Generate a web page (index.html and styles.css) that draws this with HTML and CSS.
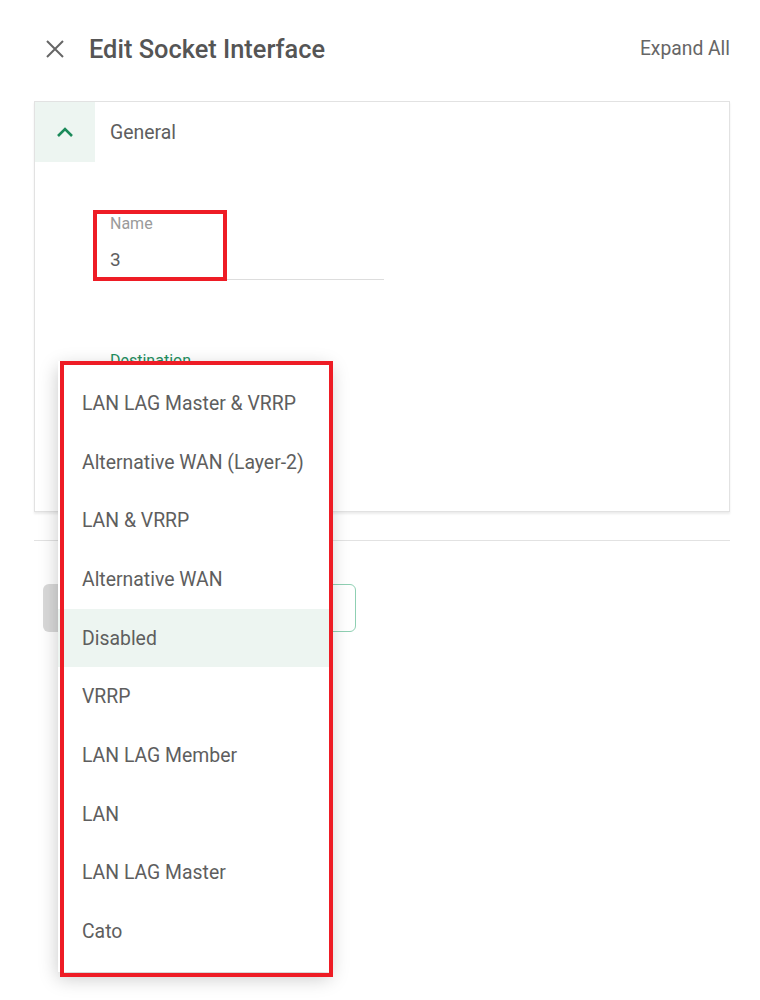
FILE: index.html
```html
<!DOCTYPE html>
<html>
<head>
<meta charset="utf-8">
<link rel="stylesheet" href="styles.css">
</head>
<body>
<div class="page">
  <header class="header">
    <div class="title-wrap">
      <svg class="close" width="20" height="20" viewBox="0 0 20 20"><path d="M2 2 L18 18 M18 2 L2 18" stroke="#666" stroke-width="2" fill="none"/></svg>
      <h1 class="title">Edit Socket Interface</h1>
    </div>
    <span class="expand">Expand All</span>
  </header>

  <section class="card">
    <div class="card-head">
      <div class="chev-cell">
        <svg width="18" height="12" viewBox="0 0 18 12"><path d="M2 10 L9 3 L16 10" stroke="#1b8a5a" stroke-width="2.6" fill="none"/></svg>
      </div>
      <span class="card-title">General</span>
    </div>
    <div class="card-body">
      <div class="field">
        <div class="label">Name</div>
        <div class="value">3</div>
      </div>
      <div class="label green">Destination</div>
    </div>
  </section>

  <hr class="sep">

  <div class="buttons">
    <div class="btn gray"></div>
    <div class="btn outline"></div>
  </div>
</div>

<div class="menu">
  <div class="item">LAN LAG Master &amp; VRRP</div>
  <div class="item">Alternative WAN (Layer-2)</div>
  <div class="item">LAN &amp; VRRP</div>
  <div class="item">Alternative WAN</div>
  <div class="item active">Disabled</div>
  <div class="item">VRRP</div>
  <div class="item">LAN LAG Member</div>
  <div class="item">LAN</div>
  <div class="item">LAN LAG Master</div>
  <div class="item">Cato</div>
</div>

<div class="mark mark-name"></div>
<div class="mark mark-menu"></div>
</body>
</html>
```

FILE: styles.css
```css
* { box-sizing: border-box; }
html, body { margin: 0; background: #fff; }
body { font-family: Roboto, "Liberation Sans", sans-serif; color: #5e5e5e; width: 760px; height: 1000px; position: relative; overflow: hidden; }

.page { padding: 0 30px 0 34px; }

.header { height: 101px; display: flex; align-items: center; justify-content: space-between; padding-bottom: 4px; }
.title-wrap { display: flex; align-items: center; }
.close { margin-left: 11px; margin-right: 24px; }
.title { margin: 0; font-size: 25.4px; font-weight: 500; color: #555; }
.expand { font-size: 19.3px; color: #666; }

.card { border: 1px solid #e2e2e2; height: 411px; box-shadow: 0 2px 2px rgba(0,0,0,0.08); }
.card-head { display: flex; align-items: center; height: 60px; }
.chev-cell { width: 60px; height: 60px; background: #edf5f1; display: flex; align-items: center; justify-content: center; }
.card-title { margin-left: 15px; font-size: 19.4px; color: #5e5e5e; }

.card-body { padding: 52px 0 0 60px; }
.field { width: 289px; padding-left: 15px; border-bottom: 1px solid #ddd; padding-bottom: 7px; }
.label { font-size: 16px; color: #9a9a9a; line-height: 20px; }
.value { font-size: 19px; line-height: 24px; margin-top: 14px; color: #5e5e5e; }
.label.green { color: #1f8f5f; padding-left: 15px; margin-top: 71px; }

.sep { border: 0; border-top: 1px solid #e2e2e2; margin: 28px 0 0; }

.buttons { display: flex; gap: 10px; margin-top: 43px; padding-left: 9px; }
.btn { height: 48px; border-radius: 6px; }
.btn.gray { width: 150px; background: #d9d9d9; }
.btn.outline { width: 153px; border: 1px solid #8fd0b3; background: #fff; }

.menu { position: absolute; left: 58px; top: 361px; width: 272px; padding: 13px 0 11px; background: #fff; box-shadow: 0 6px 18px rgba(0,0,0,0.22); }
.item { height: 58.7px; display: flex; align-items: center; padding-left: 24px; font-size: 19.4px; color: #5e5e5e; }
.item.active { background: #edf5f1; }

.mark { position: absolute; border: 4.5px solid #ee1c25; }
.mark-name { left: 93px; top: 210px; width: 134px; height: 71px; }
.mark-menu { left: 60px; top: 361px; width: 273px; height: 616px; }
```
